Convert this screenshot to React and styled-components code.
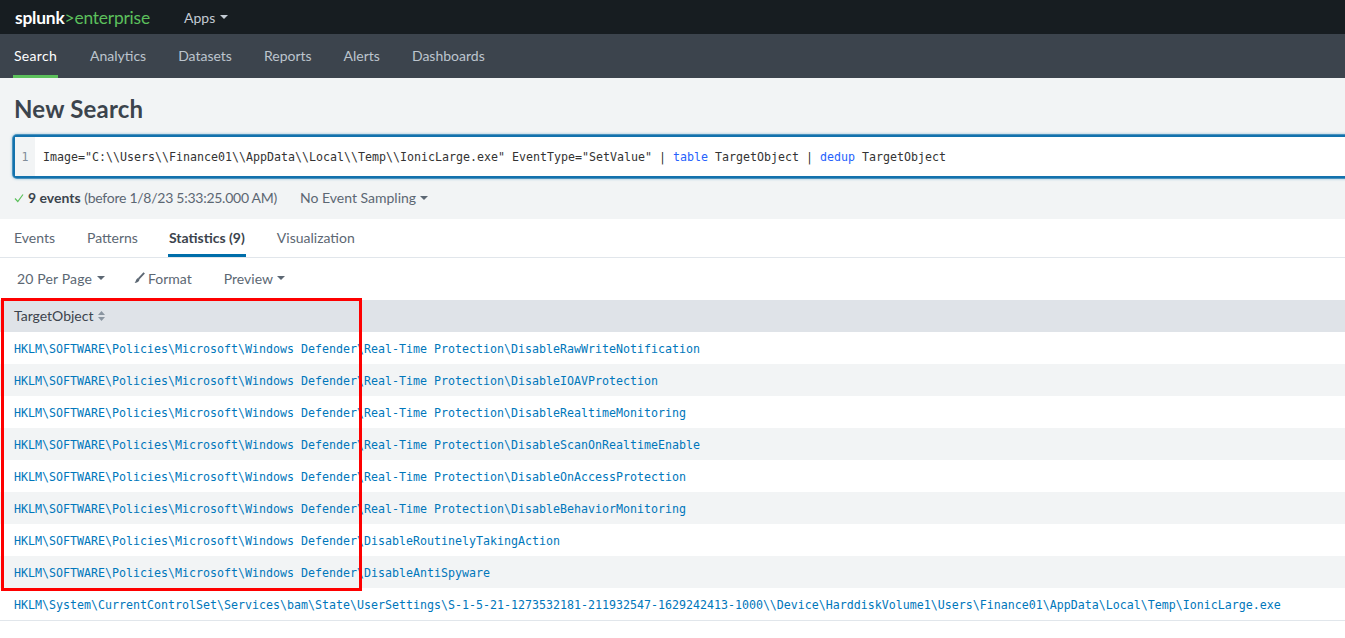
import styled, { createGlobalStyle } from "styled-components"

const rows = [
  "HKLM\\SOFTWARE\\Policies\\Microsoft\\Windows Defender\\Real-Time Protection\\DisableRawWriteNotification",
  "HKLM\\SOFTWARE\\Policies\\Microsoft\\Windows Defender\\Real-Time Protection\\DisableIOAVProtection",
  "HKLM\\SOFTWARE\\Policies\\Microsoft\\Windows Defender\\Real-Time Protection\\DisableRealtimeMonitoring",
  "HKLM\\SOFTWARE\\Policies\\Microsoft\\Windows Defender\\Real-Time Protection\\DisableScanOnRealtimeEnable",
  "HKLM\\SOFTWARE\\Policies\\Microsoft\\Windows Defender\\Real-Time Protection\\DisableOnAccessProtection",
  "HKLM\\SOFTWARE\\Policies\\Microsoft\\Windows Defender\\Real-Time Protection\\DisableBehaviorMonitoring",
  "HKLM\\SOFTWARE\\Policies\\Microsoft\\Windows Defender\\DisableRoutinelyTakingAction",
  "HKLM\\SOFTWARE\\Policies\\Microsoft\\Windows Defender\\DisableAntiSpyware",
  "HKLM\\System\\CurrentControlSet\\Services\\bam\\State\\UserSettings\\S-1-5-21-1273532181-211932547-1629242413-1000\\\\Device\\HarddiskVolume1\\Users\\Finance01\\AppData\\Local\\Temp\\IonicLarge.exe",
]

const navItems = ["Search", "Analytics", "Datasets", "Reports", "Alerts", "Dashboards"]
const tabs = ["Events", "Patterns", "Statistics (9)", "Visualization"]

const GlobalStyle = createGlobalStyle`
  html, body {
    margin: 0;
    padding: 0;
    background: #fff;
    overflow: hidden;
  }
  body {
    font-family: "Lato", "Open Sans", sans-serif;
    font-size: 14px;
    color: #3c444d;
  }
`

const Page = styled.div`
  position: relative;
  width: 1345px;
  height: 638px;
  overflow: hidden;
`

const TopBar = styled.header`
  height: 34px;
  background: #171d21;
  display: flex;
  align-items: center;
  padding-left: 15px;
`

const Logo = styled.div`
  width: 169px;
  font-size: 17.4px;
  letter-spacing: -0.2px;
  color: #fff;
  font-weight: 700;
  span {
    color: #5cc05c;
    font-weight: 400;
  }
`

const AppsMenu = styled.div`
  display: flex;
  align-items: center;
  gap: 5px;
  color: #c3cbd4;
  font-size: 14px;
`

const Caret = styled.i`
  display: inline-block;
  width: 0;
  height: 0;
  border-left: 4px solid transparent;
  border-right: 4px solid transparent;
  border-top: 4px solid ${(p) => p.$color || "#5c6773"};
`

const NavBar = styled.nav`
  height: 44px;
  background: #3c444d;
  display: flex;
  padding-left: 13px;
  gap: 32px;
`

const NavItem = styled.a`
  display: flex;
  align-items: center;
  height: 44px;
  box-sizing: border-box;
  padding: ${(p) => (p.$active ? "1px 1px 0" : "0 0 2px")};
  color: ${(p) => (p.$active ? "#fff" : "#bcc5ce")};
  border-bottom: ${(p) => (p.$active ? "3px solid #5cc05c" : "none")};
  font-size: 14px;
  letter-spacing: ${(p) => (p.$active ? "0.3px" : "0")};
`

const SearchHeader = styled.section`
  height: 141px;
  background: #f2f4f5;
  display: flex;
  flex-direction: column;
  padding-left: 13px;
`

const Title = styled.h1`
  margin: 0;
  padding: 16px 0 0 1px;
  height: 41px;
  box-sizing: content-box;
  font-size: 24px;
  line-height: 30px;
  font-weight: 700;
  letter-spacing: 0.2px;
  color: #3c444d;
`

const SearchBox = styled.div`
  width: 1400px;
  height: 43px;
  box-sizing: border-box;
  display: flex;
  align-items: stretch;
  background: #fff;
  border: 2px solid #1372ad;
  border-radius: 4px;
  box-shadow: 0 0 0 1px rgba(19, 114, 173, 0.7), 0 0 2px 2px rgba(19, 114, 173, 0.18);
`

const Gutter = styled.div`
  width: 20px;
  background: #f2f4f5;
  color: #818d99;
  font-family: "DejaVu Sans Mono", monospace;
  font-size: 11.63px;
  display: flex;
  align-items: center;
  justify-content: center;
`

const Query = styled.div`
  font-family: "DejaVu Sans Mono", monospace;
  font-size: 11.63px;
  color: #333;
  display: flex;
  align-items: center;
  white-space: pre;
  padding-left: 8px;
  b {
    font-weight: 400;
    color: #2662fc;
  }
`

const StatusLine = styled.div`
  display: flex;
  align-items: center;
  padding: 11px 0 0 1px;
  font-size: 14px;
  color: #5c6773;
  b {
    color: #3c444d;
  }
`

const Range = styled.span`
  letter-spacing: -0.26px;
`

const Check = styled.svg`
  width: 10px;
  height: 10px;
  margin-right: 4px;
`

const Sampling = styled.div`
  display: flex;
  align-items: center;
  gap: 4px;
  margin-left: 23px;
`

const Tabs = styled.div`
  height: 39px;
  box-sizing: border-box;
  display: flex;
  gap: 32px;
  padding-left: 14px;
  border-bottom: 1px solid #e1e6eb;
`

const Tab = styled.a`
  height: 38px;
  box-sizing: border-box;
  display: flex;
  align-items: center;
  color: ${(p) => (p.$active ? "#3c444d" : "#5c6773")};
  font-weight: ${(p) => (p.$active ? 700 : 400)};
  border-bottom: ${(p) => (p.$active ? "3px solid #006eaa" : "none")};
  padding: ${(p) => (p.$active ? "1px 1px 0" : "0 0 2px")};
  margin: ${(p) => (p.$active ? "0 -1px 0 -2px" : "0")};
`

const ToolBar = styled.div`
  height: 42px;
  box-sizing: border-box;
  display: flex;
  align-items: center;
  padding: 0 0 2px 17px;
  color: #5c6773;
`

const ToolItem = styled.div`
  display: flex;
  align-items: center;
  gap: ${(p) => p.$gap || 5}px;
  margin-right: ${(p) => p.$right || 0}px;
  letter-spacing: ${(p) => p.$spacing || 0}px;
`

const Table = styled.div`
  display: flex;
  flex-direction: column;
`

const HeaderRow = styled.div`
  height: 32px;
  box-sizing: border-box;
  background: #dfe3e8;
  display: flex;
  align-items: center;
  gap: 5px;
  padding: 0 0 2px 14px;
  color: #3c444d;
`

const Sort = styled.svg`
  width: 7px;
  height: 10px;
  margin-top: 2px;
`

const Row = styled.div`
  height: ${(p) => (p.$last ? "33px" : "32px")};
  box-sizing: border-box;
  display: flex;
  align-items: center;
  padding: 2px 0 0 14px;
  background: ${(p) => (p.$odd ? "#f2f4f5" : "#fff")};
  border-bottom: ${(p) => (p.$last ? "1px solid #e1e6eb" : "none")};
  font-family: "DejaVu Sans Mono", monospace;
  font-size: 11.63px;
  color: #0077bb;
  white-space: pre;
`

const Highlight = styled.div`
  position: absolute;
  left: 1px;
  top: 298px;
  width: 355px;
  height: 287px;
  border: 3px solid #fe0000;
  pointer-events: none;
`

export default function App() {
  return (
    <Page>
      <GlobalStyle />
      <TopBar>
        <Logo>
          splunk<span>&gt;enterprise</span>
        </Logo>
        <AppsMenu>
          Apps <Caret $color="#c3cbd4" />
        </AppsMenu>
      </TopBar>
      <NavBar>
        {navItems.map((item, i) => (
          <NavItem key={item} $active={i === 0}>
            {item}
          </NavItem>
        ))}
      </NavBar>
      <SearchHeader>
        <Title>New Search</Title>
        <SearchBox>
          <Gutter>1</Gutter>
          <Query>
            {'Image="C:\\\\Users\\\\Finance01\\\\AppData\\\\Local\\\\Temp\\\\IonicLarge.exe" EventType="SetValue" | '}
            <b>table</b>
            {" TargetObject | "}
            <b>dedup</b>
            {" TargetObject"}
          </Query>
        </SearchBox>
        <StatusLine>
          <Check viewBox="0 0 10 10">
            <path d="M1 5.5 L3.8 8.5 L9 1.5" fill="none" stroke="#5cc05c" strokeWidth="1.2" />
          </Check>
          <b>9 events</b>&nbsp;<Range>(before 1/8/23 5:33:25.000 AM)</Range>
          <Sampling>
            No Event Sampling <Caret />
          </Sampling>
        </StatusLine>
      </SearchHeader>
      <Tabs>
        {tabs.map((t) => (
          <Tab key={t} $active={t.startsWith("Statistics")}>
            {t}
          </Tab>
        ))}
      </Tabs>
      <ToolBar>
        <ToolItem $right={29} $spacing={0.15}>
          20 Per Page <Caret />
        </ToolItem>
        <ToolItem $gap={3} $right={32}>
          <svg width="11" height="12" viewBox="0 0 11 12">
            <path d="M10.2 0.8 L4.6 6.8" fill="none" stroke="#5c6773" strokeWidth="1.9" />
            <path d="M3.2 6.4 C4.6 5.8 5.8 7 5.2 8.4 C4.6 9.9 2.5 10.8 0.6 11 C1.8 9.8 1.8 7.4 3.2 6.4 Z" fill="#5c6773" />
          </svg>
          Format
        </ToolItem>
        <ToolItem $gap={4}>
          Preview <Caret />
        </ToolItem>
      </ToolBar>
      <Table>
        <HeaderRow>
          TargetObject
          <Sort viewBox="0 0 7 10">
            <path d="M3.5 0 L7 4 H0 Z M3.5 10 L0 6 H7 Z" fill="#8a95a0" />
          </Sort>
        </HeaderRow>
        {rows.map((r, i) => (
          <Row key={r} $odd={i % 2 === 1} $last={i === rows.length - 1}>
            {r}
          </Row>
        ))}
      </Table>
      <Highlight />
    </Page>
  )
}
